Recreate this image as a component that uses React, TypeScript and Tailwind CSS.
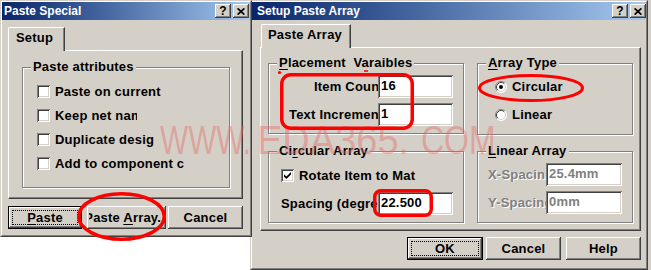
import React from "react";

const FACE = "bg-[#d4d0c8]";
const RAISED =
  "shadow-[inset_-1px_-1px_0_#404040,inset_1px_1px_0_#ffffff,inset_-2px_-2px_0_#808080,inset_2px_2px_0_#d4d0c8]";
const SUNKEN =
  "shadow-[inset_1px_1px_0_#808080,inset_-1px_-1px_0_#ffffff,inset_2px_2px_0_#404040,inset_-2px_-2px_0_#d4d0c8]";
const GROUP =
  "border border-[#808080] shadow-[inset_1px_1px_0_#ffffff,1px_1px_0_#ffffff]";

function U({ children }: { children: React.ReactNode }) {
  return <span className="underline underline-offset-[2px] decoration-1">{children}</span>;
}

function CaptionButtons() {
  return (
    <div className="flex items-center gap-[2px]">
      <div
        className={`w-[16px] h-[14px] ${FACE} ${RAISED} flex items-center justify-center text-[12px] leading-none font-bold text-black`}
      >
        ?
      </div>
      <div className={`w-[16px] h-[14px] ${FACE} ${RAISED} flex items-center justify-center`}>
        <svg width="8" height="7" viewBox="0 0 8 7">
          <path d="M0.6 0.4 L7.4 6.6 M7.4 0.4 L0.6 6.6" stroke="#000" strokeWidth="1.7" />
        </svg>
      </div>
    </div>
  );
}

function TitleBar({ title, className }: { title: string; className: string }) {
  return (
    <div
      className={`h-[18px] shrink-0 flex items-center justify-between bg-linear-to-r from-[#0a246a] to-[#a6caf0] ${className}`}
    >
      <span className="text-white font-bold text-[12px] leading-[18px] whitespace-nowrap tracking-normal">{title}</span>
      <CaptionButtons />
    </div>
  );
}

function Check({ checked }: { checked?: boolean }) {
  return (
    <div className={`w-[13px] h-[13px] shrink-0 bg-white ${SUNKEN} flex items-center justify-center`}>
      {checked && (
        <svg width="7" height="7" viewBox="0 0 7 7">
          <path d="M0 2.3 L2.4 4.6 L7 0 L7 2.6 L2.4 7 L0 4.7 Z" fill="#000" />
        </svg>
      )}
    </div>
  );
}

function Radio({ checked }: { checked?: boolean }) {
  return (
    <svg width="12" height="12" viewBox="0 0 12 12" className="shrink-0">
      <circle cx="6" cy="6" r="5.5" fill="#ffffff" />
      <path d="M2.11 9.89 A5.5 5.5 0 0 1 9.89 2.11" fill="none" stroke="#808080" strokeWidth="1" />
      <path d="M9.89 2.11 A5.5 5.5 0 0 1 2.11 9.89" fill="none" stroke="#ffffff" strokeWidth="1" />
      <path d="M2.82 9.18 A4.5 4.5 0 0 1 9.18 2.82" fill="none" stroke="#404040" strokeWidth="1" />
      <path d="M9.18 2.82 A4.5 4.5 0 0 1 2.82 9.18" fill="none" stroke="#d4d0c8" strokeWidth="1" />
      {checked && <circle cx="6" cy="6" r="2" fill="#000" />}
    </svg>
  );
}

function Field({ value, className, disabled }: { value: string; className: string; disabled?: boolean }) {
  return (
    <div
      className={`h-[23px] shrink-0 bg-white ${SUNKEN} flex items-center pl-[3px] pb-[2px] overflow-hidden whitespace-nowrap leading-[14px] ${
        disabled ? "text-[#808080]" : "text-black"
      } ${className}`}
    >
      {value}
    </div>
  );
}

function Group({
  title,
  className,
  children,
}: {
  title: React.ReactNode;
  className: string;
  children: React.ReactNode;
}) {
  return (
    <div className={`${GROUP} ${className}`}>
      <div className={`-mt-[8px] ml-[8px] w-fit px-[2px] ${FACE} leading-[14px] whitespace-nowrap`}>{title}</div>
      {children}
    </div>
  );
}

function Frame({ className, children }: { className: string; children: React.ReactNode }) {
  return (
    <div
      className={`${FACE} shrink-0 border border-t-[#d4d0c8] border-l-[#d4d0c8] border-r-[#404040] border-b-[#404040] ${className}`}
    >
      <div className="h-full border border-t-white border-l-white border-r-[#808080] border-b-[#808080] flex flex-col">
        {children}
      </div>
    </div>
  );
}

function Tab({ children, className }: { children: React.ReactNode; className: string }) {
  return (
    <div
      className={`relative z-10 -mb-[1px] h-[24px] ${FACE} border-t border-l border-r border-t-white border-l-white border-r-[#404040] rounded-tl-[2px] shadow-[inset_-1px_0_0_#808080] pt-[3px] leading-[14px] whitespace-nowrap ${className}`}
    >
      {children}
    </div>
  );
}

const PANEL =
  "border border-t-white border-l-white border-r-[#404040] border-b-[#404040] shadow-[inset_-1px_-1px_0_#808080]";

function CheckRow({ label, checked, clip }: { label: string; checked?: boolean; clip?: string }) {
  return (
    <div className="flex items-center h-[13px]">
      <Check checked={checked} />
      <span className={`ml-[5px] leading-[14px] whitespace-nowrap overflow-hidden ${clip ?? ""}`}>{label}</span>
    </div>
  );
}

function PasteSpecial() {
  return (
    <Frame className="relative z-10 w-[252px] h-[237px]">
      <TitleBar title="Paste Special" className="pl-[2px] pr-[1px]" />
      <div className="mt-[7px] pl-[6px] flex">
        <Tab className="w-[57px] pl-[7px]">Setup</Tab>
      </div>
      <div className={`ml-[6px] w-[235px] h-[149px] shrink-0 ${PANEL}`}>
        <Group title="Paste attributes" className="ml-[13px] mt-[16px] w-[208px] h-[121px]">
          <div className="mt-[11px] pl-[14px] flex flex-col gap-[11px]">
            <CheckRow label="Paste on current" />
            <CheckRow label="Keep net name" clip="w-[82px]" />
            <CheckRow label="Duplicate desig" />
            <CheckRow label="Add to component c" />
          </div>
        </Group>
      </div>
      <div className="mt-[7px] pl-[6px] flex">
        <div className="w-[74px] h-[23px] border border-black">
          <div className={`w-full h-full ${FACE} ${RAISED} p-[3px]`}>
            <div className="w-full h-full border border-dotted border-black flex items-center justify-center leading-[14px]">
              <span>
                <U>P</U>aste
              </span>
            </div>
          </div>
        </div>
        <div className={`ml-[5px] w-[79px] h-[23px] ${FACE} ${RAISED} flex items-center`}>
          <div className="mx-[2px] w-full overflow-hidden flex justify-center leading-[14px]">
            <span className="whitespace-nowrap shrink-0">
              Paste <U>A</U>rray...
            </span>
          </div>
        </div>
        <div className={`ml-[2px] w-[75px] h-[23px] ${FACE} ${RAISED} flex items-center justify-center leading-[14px]`}>
          Cancel
        </div>
      </div>
    </Frame>
  );
}

function SetupPasteArray() {
  return (
    <Frame className="-ml-[2px] w-[398px] h-[270px]">
      <TitleBar title="Setup Paste Array" className="pl-[5px] pr-0" />
      <div className="mt-[4px] pl-[9px] flex">
        <Tab className="w-[90px] pl-[6px]">Paste Array</Tab>
      </div>
      <div className={`ml-[8px] w-[381px] h-[184px] shrink-0 ${PANEL} flex pl-[7px]`}>
        <div className="w-[196px] flex flex-col">
          <Group
            title={
              <span>
                <U>P</U>lacement&nbsp; Varaibles
              </span>
            }
            className="mt-[15px] h-[71px]"
          >
            <div className="mt-[5px] flex flex-col gap-[5px]">
              <div className="flex items-center">
                <span className="ml-[45px] w-[64px] overflow-hidden whitespace-nowrap leading-[14px]">Item Count</span>
                <Field value="16" className="w-[75px]" />
              </div>
              <div className="flex items-center">
                <span className="ml-[20px] w-[89px] overflow-hidden whitespace-nowrap leading-[14px]">
                  Text Increment
                </span>
                <Field value="1" className="w-[75px]" />
              </div>
            </div>
          </Group>
          <Group
            title={
              <span>
                Ci<U>r</U>cular Array
              </span>
            }
            className="mt-[17px] h-[72px]"
          >
            <div className="mt-[11px] pl-[12px]">
              <div className="flex items-center h-[13px]">
                <Check checked />
                <span className="ml-[5px] leading-[14px] whitespace-nowrap">Rotate Item to Mat</span>
              </div>
              <div className="mt-[10px] flex items-center">
                <span className="w-[97px] overflow-hidden whitespace-nowrap leading-[14px]">Spacing (degrees)</span>
                <Field value="22.500" className="w-[75px]" />
              </div>
            </div>
          </Group>
        </div>
        <div className="ml-[13px] w-[156px] flex flex-col">
          <Group
            title={
              <span>
                <U>A</U>rray Type
              </span>
            }
            className="mt-[15px] h-[72px]"
          >
            <div className="mt-[11px] pl-[17px] flex flex-col gap-[16px]">
              <div className="flex items-center h-[12px]">
                <Radio checked />
                <span className="ml-[5px] leading-[14px]">Circular</span>
              </div>
              <div className="flex items-center h-[12px]">
                <Radio />
                <span className="ml-[5px] leading-[14px]">Linear</span>
              </div>
            </div>
          </Group>
          <Group
            title={
              <span>
                <U>L</U>inear Array
              </span>
            }
            className="mt-[16px] h-[72px]"
          >
            <div className="mt-[5px] flex flex-col gap-[5px]">
              <div className="flex items-center">
                <span className="ml-[10px] w-[58px] overflow-hidden whitespace-nowrap leading-[14px] text-[#808080] [text-shadow:1px_1px_0_#ffffff]">
                  X-Spacing
                </span>
                <Field value="25.4mm" className="w-[76px]" disabled />
              </div>
              <div className="flex items-center">
                <span className="ml-[10px] w-[58px] overflow-hidden whitespace-nowrap leading-[14px] text-[#808080] [text-shadow:1px_1px_0_#ffffff]">
                  Y-Spacing
                </span>
                <Field value="0mm" className="w-[76px]" disabled />
              </div>
            </div>
          </Group>
        </div>
      </div>
      <div className="mt-[6px] pr-[5px] flex justify-end">
        <div className="w-[76px] h-[23px] border border-black">
          <div className={`w-full h-full ${FACE} ${RAISED} p-[3px]`}>
            <div className="w-full h-full border border-dotted border-black flex items-center justify-center leading-[14px]">
              OK
            </div>
          </div>
        </div>
        <div className={`ml-[3px] w-[75px] h-[23px] ${FACE} ${RAISED} flex items-center justify-center leading-[14px]`}>
          Cancel
        </div>
        <div className={`ml-[5px] w-[75px] h-[23px] ${FACE} ${RAISED} flex items-center justify-center leading-[14px]`}>
          Help
        </div>
      </div>
    </Frame>
  );
}

export default function App() {
  return (
    <div className="relative w-[651px] h-[270px] overflow-hidden bg-white flex items-start font-['Liberation_Sans',Arial,sans-serif] font-bold text-[13px] tracking-[0.2px] text-black">
      <PasteSpecial />
      <SetupPasteArray />
      <div className={`flex-1 h-[270px] ${FACE}`} />

      {/* watermark */}
      <div className="absolute inset-0 z-20 pointer-events-none font-['Liberation_Sans',Arial,sans-serif] font-normal tracking-normal text-[40px] leading-none text-[rgba(230,100,100,0.42)] whitespace-nowrap">
        <span className="absolute left-[160px] top-[120px] origin-left scale-x-[0.745]">WWW.</span>
        <span className="absolute left-[257px] top-[120px] origin-left scale-x-[0.95]">EDA365.</span>
        <span className="absolute left-[421px] top-[120px] origin-left scale-x-[0.8]">COM</span>
      </div>

      {/* red annotations */}
      <svg className="absolute left-0 top-0 z-30 pointer-events-none" width="651" height="270" viewBox="0 0 651 270">
        <rect x="281.75" y="74.75" width="130.5" height="53.5" rx="9" fill="none" stroke="#ff0000" strokeWidth="3.5" />
        <circle cx="279.5" cy="72.5" r="1.6" fill="#ff0000" />
        <line x1="364" y1="71" x2="368" y2="71" stroke="#ff0000" strokeWidth="1.5" />
        <rect x="374.75" y="190.75" width="56.5" height="24.5" rx="6" fill="none" stroke="#ff0000" strokeWidth="3.5" />
        <ellipse cx="531" cy="88" rx="51.5" ry="12.5" fill="none" stroke="#ff0000" strokeWidth="3" />
        <ellipse cx="121.5" cy="216.5" rx="42.75" ry="22.75" fill="none" stroke="#ff0000" strokeWidth="3.5" />
      </svg>
    </div>
  );
}
